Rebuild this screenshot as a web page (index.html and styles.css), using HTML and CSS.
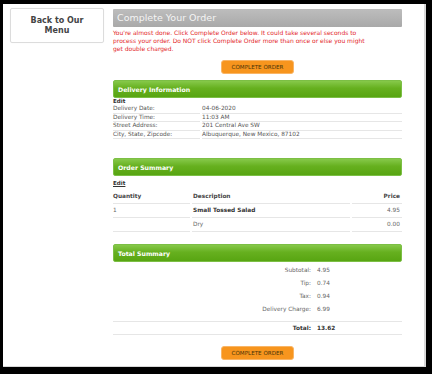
FILE: index.html
```html
<!DOCTYPE html>
<html>
<head>
<meta charset="utf-8">
<link rel="stylesheet" href="styles.css">
</head>
<body>
<div class="frame">
  <aside class="side">
    <a class="back" href="#">Back to Our<br>Menu</a>
  </aside>
  <main class="main">
    <h1 class="title">Complete Your Order</h1>
    <p class="warn">You're almost done. Click Complete Order below. It could take several seconds to<br>process your order. Do NOT click Complete Order more than once or else you might<br>get double charged.</p>
    <div class="btn-row"><button class="btn">COMPLETE ORDER</button></div>

    <section class="panel">
      <h2 class="bar">Delivery Information</h2>
      <div class="edit">Edit</div>
      <div class="kv">
        <span>Delivery Date:</span><span>04-06-2020</span>
        <span>Delivery Time:</span><span>11:03 AM</span>
        <span>Street Address:</span><span>201 Central Ave SW</span>
        <span>City, State, Zipcode:</span><span>Albuquerque, New Mexico, 87102</span>
      </div>
    </section>

    <section class="panel order">
      <h2 class="bar">Order Summary</h2>
      <div class="edit edit-u">Edit</div>
      <div class="items">
        <span class="th">Quantity</span><span class="th desc">Description</span><span class="th num">Price</span>
        <span>1</span><span class="desc strong">Small Tossed Salad</span><span class="num">4.95</span>
        <span></span><span class="desc">Dry</span><span class="num">0.00</span>
      </div>
    </section>

    <section class="panel total">
      <h2 class="bar">Total Summary</h2>
      <div class="sums">
        <span class="lbl">Subtotal:</span><span>4.95</span>
        <span class="lbl">Tip:</span><span>0.74</span>
        <span class="lbl">Tax:</span><span>0.94</span>
        <span class="lbl">Delivery Charge:</span><span>6.99</span>
      </div>
      <div class="sums grand">
        <span class="lbl">Total:</span><span>13.62</span>
      </div>
    </section>
    <div class="btn-row btn-bottom"><button class="btn">COMPLETE ORDER</button></div>
  </main>
</div>
</body>
</html>
```

FILE: styles.css
```css
* { box-sizing: border-box; }
html, body { margin: 0; padding: 0; }
body {
  background: #000;
  width: 432px;
  height: 374px;
  overflow: hidden;
  font-family: "DejaVu Sans", Verdana, sans-serif;
}
.frame {
  margin: 4px 6px 7px 3px;
  width: 423px;
  height: 363px;
  background: #fff;
  border-right: 2px solid #d8d8d8;
  border-bottom: 1px solid #d8d8d8;
  display: flex;
  align-items: flex-start;
  padding: 4px 0 0 7px;
  gap: 9px;
}
.side { width: 94px; flex: none; }
.back {
  display: block;
  height: 35px;
  border: 1px solid #dcdcdc;
  border-radius: 2px;
  box-shadow: 0 0 1px rgba(0,0,0,0.08);
  text-align: center;
  font-weight: bold;
  font-size: 8px;
  line-height: 10px;
  padding-top: 7px;
  color: #444;
  text-decoration: none;
}
.main { width: 289px; flex: none; margin-top: 1px; }
.title {
  margin: 0;
  height: 18px;
  line-height: 18px;
  padding-left: 4px;
  font-size: 9.5px;
  font-weight: normal;
  color: #f4f4f4;
  background: linear-gradient(#bdbdbd, #a9a9a9);
  border-radius: 1px;
}
.warn {
  margin: 2px 0 0;
  font-size: 6px;
  line-height: 8px;
  color: #e3262b;
  white-space: nowrap;
}
.btn-row { display: flex; justify-content: center; margin-top: 7px; }
.btn {
  width: 73px;
  height: 14px;
  padding: 0;
  font-family: "DejaVu Sans", Verdana, sans-serif;
  font-size: 5.6px;
  color: #4a3408;
  background: #f7951e;
  border: 1px solid #f9b566;
  border-radius: 3px;
}
.btn-bottom { margin-top: 11px; }
.panel { margin-top: 6px; }
.panel.order { margin-top: 19px; }
.panel.total { margin-top: 12px; }
.bar {
  margin: 0;
  height: 18px;
  line-height: 18px;
  padding-left: 4px;
  font-size: 6.2px;
  font-weight: bold;
  color: #fff;
  background: linear-gradient(#86c94a, #66b01f 45%, #58a512);
  border: 1px solid #7cbf45;
  border-radius: 2px;
}
.edit {
  font-size: 5.6px;
  font-weight: bold;
  line-height: 7px;
  color: #333;
}
.edit-u { line-height: 14px; text-decoration: underline; }
.kv {
  display: grid;
  grid-template-columns: 87px 1fr;
  column-gap: 2px;
  font-size: 5.8px;
  color: #555;
}
.kv span {
  line-height: 7.5px;
  border-bottom: 1px solid #e6e6e6;
}
.items {
  display: grid;
  grid-template-columns: 77px 158px 1fr;
  column-gap: 2px;
  font-size: 5.8px;
  color: #666;
}
.items span {
  line-height: 13px;
  border-bottom: 1px solid #e6e6e6;
}
.items .th { font-weight: bold; color: #444; }
.items .desc { padding-left: 1px; }
.items .strong { font-weight: bold; color: #333; }
.items .num { text-align: right; padding-right: 2px; }
.sums {
  display: grid;
  grid-template-columns: 198px 1fr;
  column-gap: 6px;
  font-size: 5.8px;
  color: #666;
  padding-top: 2px;
}
.sums span { line-height: 13px; }
.sums .lbl { text-align: right; }
.grand {
  margin-top: 5px;
  padding-top: 0;
  border-top: 1px solid #e6e6e6;
  border-bottom: 1px solid #e6e6e6;
  font-weight: bold;
  color: #333;
}
.grand span { line-height: 12px; }
```
